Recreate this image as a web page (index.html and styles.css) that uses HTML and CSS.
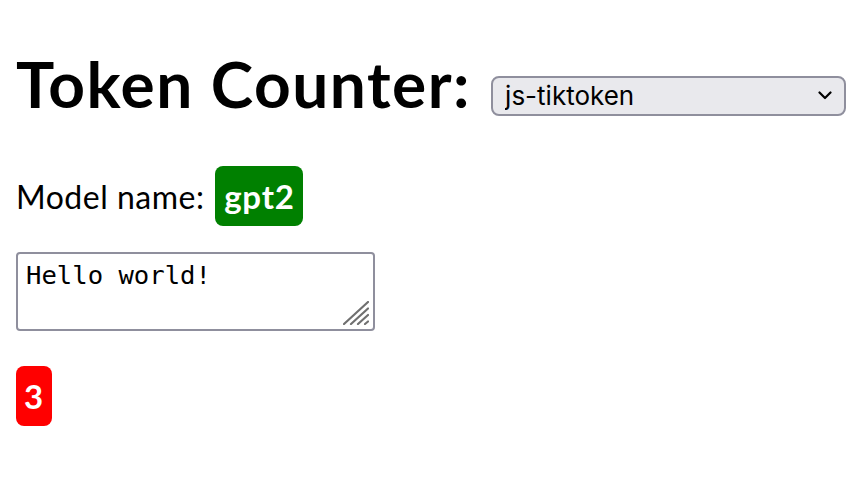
FILE: index.html
```html
<!DOCTYPE html>
<html>
<head>
<meta charset="utf-8">
<link rel="stylesheet" href="styles.css">
</head>
<body>
<h1 class="title">Token Counter: <select class="lib"><option>js-tiktoken</option></select></h1>
<p class="model">Model name: <span class="badge badge-green">gpt2</span></p>
<textarea class="input">Hello world!</textarea>
<div class="count"><span class="badge badge-red">3</span></div>
</body>
</html>
```
FILE: styles.css
```css
html, body {
  margin: 0;
  padding: 0;
  background: #fff;
}
body {
  padding: 16px;
  font-family: "Lato", sans-serif;
  color: #000;
}
.title {
  margin: 24px 0 0;
  font-size: 64px;
  font-weight: 700;
  letter-spacing: 1.5px;
  line-height: 88px;
  height: 88px;
  display: flex;
  align-items: center;
  white-space: nowrap;
}
.lib {
  margin-left: 20px;
  margin-top: 23px;
  width: 355px;
  height: 40px;
  font-family: "Inter", "Noto Sans", sans-serif;
  font-size: 26px;
  font-weight: 400;
  letter-spacing: 0;
  color: #000;
  background: #e9e9ed url("data:image/svg+xml;utf8,<svg xmlns='http://www.w3.org/2000/svg' width='14' height='9' viewBox='0 0 14 9'><path d='M1.5 1.5 L7 7 L12.5 1.5' fill='none' stroke='black' stroke-width='2.2' stroke-linecap='round' stroke-linejoin='round'/></svg>") no-repeat right 12px center;
  border: 2px solid #8f8f9d;
  border-radius: 8px;
  padding: 0 12px;
  appearance: none;
  -webkit-appearance: none;
}
.model {
  margin: 38px 0 0;
  font-size: 32px;
  letter-spacing: 0.5px;
  display: flex;
  align-items: center;
  height: 60px;
}
.badge {
  display: inline-flex;
  align-items: center;
  justify-content: center;
  height: 60px;
  border-radius: 8px;
  color: #fff;
  font-weight: 700;
  font-size: 33px;
  letter-spacing: 0.8px;
}
.badge-green {
  background: #008000;
  width: 88px;
  margin-left: 11px;
}
.badge-red {
  background: #ff0000;
  width: 36px;
}
.input {
  display: block;
  margin-top: 26px;
  width: 359px;
  height: 79px;
  box-sizing: border-box;
  border: 2px solid #8f8f9d;
  border-radius: 4px;
  padding: 6px 8px;
  resize: none;
  font-family: "DejaVu Sans Mono", monospace;
  font-size: 25.6px;
  color: #000;
  background: #fff url("data:image/svg+xml;utf8,<svg xmlns='http://www.w3.org/2000/svg' width='26' height='24' viewBox='0 0 26 24'><g stroke='%23707070' stroke-width='2.2' stroke-linecap='round'><path d='M1 23 L25 1'/><path d='M8 23 L25 7.5'/><path d='M15 23 L25 14'/><path d='M22 23 L25 20.5'/></g></svg>") no-repeat right 4px bottom 4px;
}
.count {
  margin-top: 35px;
  display: flex;
}
```
